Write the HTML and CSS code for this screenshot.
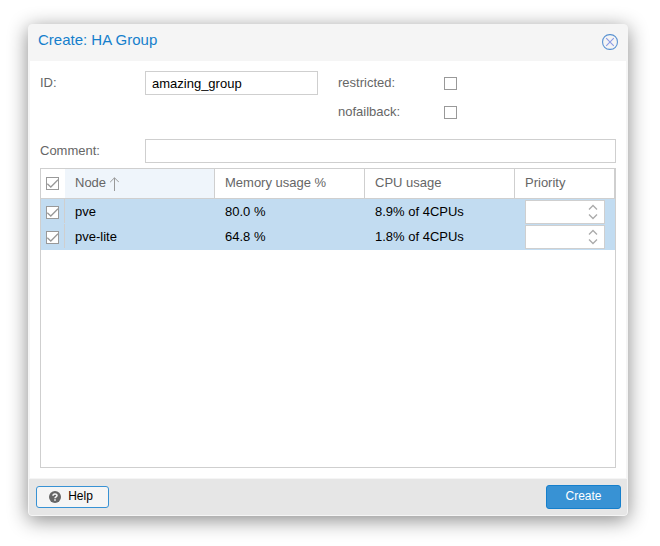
FILE: index.html
```html
<!DOCTYPE html>
<html lang="en">
<head>
<meta charset="utf-8">
<title>Create: HA Group</title>
<link rel="stylesheet" href="styles.css">
</head>
<body>
<svg class="defs" width="0" height="0">
  <symbol id="tick" viewBox="0 0 13 13"><rect x=".5" y=".5" width="12" height="12" fill="#fff" stroke="#999"/><path d="M1.3 6.8 L4.8 10 L12 2.8" fill="none" stroke="#999" stroke-width="1.3"/></symbol>
  <symbol id="spin" viewBox="0 0 10 16"><path d="M1 5.5 L5 1.5 L9 5.5 M1 10.5 L5 14.5 L9 10.5" fill="none" stroke="#aaa" stroke-width="1.3"/></symbol>
</svg>
<main class="window">
  <header class="titlebar">
    <h1 class="title">Create: HA Group</h1>
    <svg class="close" viewBox="0 0 16 16"><rect x=".6" y=".6" width="14.8" height="14.8" rx="7" fill="none" stroke="#5b93d2" stroke-width="1.1"/><path d="M4.2 4.2 L11.8 11.8 M11.8 4.2 L4.2 11.8" stroke="#8b9be4" stroke-width="1.1"/></svg>
  </header>
  <section class="body">
    <div class="form">
      <div class="field"><label class="label">ID:</label><div class="input id-input">amazing_group</div></div>
      <div class="checks">
        <div class="check-row"><label class="label">restricted:</label><span class="box"></span></div>
        <div class="check-row"><label class="label">nofailback:</label><span class="box"></span></div>
      </div>
    </div>
    <div class="field"><label class="label">Comment:</label><div class="input comment-input"></div></div>
    <div class="grid">
      <div class="row head">
        <div class="pick"><svg class="tick"><use href="#tick"/></svg></div>
        <div class="cell sorted">Node<svg class="arrow" viewBox="0 0 10 14"><path d="M5.5 .8 V14 M1.1 5.2 L5.5 .8 L9.9 5.2" fill="none" stroke="#999" stroke-width="1"/></svg></div>
        <div class="cell">Memory usage %</div>
        <div class="cell">CPU usage</div>
        <div class="cell">Priority</div>
      </div>
      <div class="row selected">
        <div class="pick"><svg class="tick"><use href="#tick"/></svg></div>
        <div class="cell">pve</div><div class="cell">80.0 %</div><div class="cell">8.9% of 4CPUs</div>
        <div class="cell"><div class="spinner"><svg class="spin"><use href="#spin"/></svg></div></div>
      </div>
      <div class="row selected">
        <div class="pick"><svg class="tick"><use href="#tick"/></svg></div>
        <div class="cell">pve-lite</div><div class="cell">64.8 %</div><div class="cell">1.8% of 4CPUs</div>
        <div class="cell"><div class="spinner"><svg class="spin"><use href="#spin"/></svg></div></div>
      </div>
    </div>
  </section>
  <footer class="toolbar">
    <button class="btn help"><svg class="help-icon" viewBox="0 0 12 12"><circle cx="6" cy="6" r="6" fill="#666"/><path d="M4 4.7 C4 2.4 8 2.4 8 4.5 C8 5.9 6 5.8 6 7.3" fill="none" stroke="#f5f5f5" stroke-width="1.6"/><path d="M5.2 8.3 H6.8 V9.8 H5.2 Z" fill="#f5f5f5"/></svg>Help</button>
    <button class="btn create">Create</button>
  </footer>
</main>
</body>
</html>
```
FILE: styles.css
```css
* { box-sizing: border-box; }
body {
  margin: 0;
  padding: 24px 32px 30px 28px;
  background: #fff;
  font: 13px/17px "Liberation Sans", Arial, sans-serif;
  color: #000;
}
.defs { display: none; }
.window {
  display: flex;
  flex-direction: column;
  width: 600px;
  height: 492px;
  border: 1px solid #f5f5f5;
  border-radius: 4px;
  background: #f5f5f5;
  box-shadow: 0 4px 20px #888;
  overflow: hidden;
}
.titlebar {
  display: flex;
  justify-content: space-between;
  align-items: flex-start;
  height: 36px;
  padding: 5px 9px 0;
}
.title { margin: 0; font-size: 15px; line-height: 20px; font-weight: 400; color: #157fcc; }
.close { width: 16px; height: 16px; margin-top: 4px; }
.body {
  height: 417px;
  margin: 0 1px;
  padding: 10px 10px 0;
  background: #fff;
}
.form { display: flex; gap: 20px; height: 68px; }
.field { display: flex; }
.label { width: 105px; padding-top: 3px; color: #666; }
.input { height: 24px; padding: 3px 6px; border: 1px solid #cfcfcf; background: #fff; }
.id-input { width: 173px; }
.comment-input { width: 471px; }
.check-row { display: flex; height: 29px; }
.check-row .label { width: 106px; }
.box { width: 13px; height: 13px; margin-top: 6px; border: 1px solid #999; }
.grid { width: 576px; height: 300px; margin-top: 5px; border: 1px solid #cfcfcf; }
.row { display: grid; grid-template-columns: 24px 150px 150px 150px 100px; height: 25px; }
.pick { display: flex; align-items: center; padding-left: 5px; }
.tick { display: block; width: 13px; height: 13px; }
.cell { padding: 4px 10px 0; white-space: nowrap; }
.head { height: 30px; border-bottom: 1px solid #cfcfcf; color: #666; }
.head .cell { padding-top: 5px; border-right: 1px solid #cfcfcf; }
.head .sorted { display: flex; background: #eff5fb; }
.arrow { width: 10px; height: 14px; margin: 3px 0 0 3px; }
.selected { background: #c2dcf1; }
.selected + .selected { height: 26px; }
.selected .pick { height: 24px; border-right: 1px solid #cfcfcf; padding-top: 2px; }
.selected .cell:last-child { padding-top: 1px; }
.spinner { display: flex; justify-content: flex-end; align-items: center; width: 80px; height: 24px; padding-right: 6px; border: 1px solid #cfcfcf; background: #fff; }
.spin { width: 10px; height: 16px; }
.toolbar {
  display: flex;
  justify-content: space-between;
  height: 36px;
  margin-top: 1px;
  padding: 6px 6px 0 7px;
  background: #e6e6e6;
}
.btn { display: flex; justify-content: center; align-items: flex-start; font: 12px/18px "Liberation Sans", Arial, sans-serif; border-radius: 3px; }
.help { width: 73px; height: 22px; margin-top: 1px; padding: 0; border: 1px solid #3892d4; background: #f5f5f5; color: #000; }
.help-icon { width: 12px; height: 12px; margin: 4px 7px 0 -3px; }
.create { width: 75px; height: 24px; padding: 1px 0 0; border: 1px solid #157fcc; background: #3892d4; color: #fff; }
```
